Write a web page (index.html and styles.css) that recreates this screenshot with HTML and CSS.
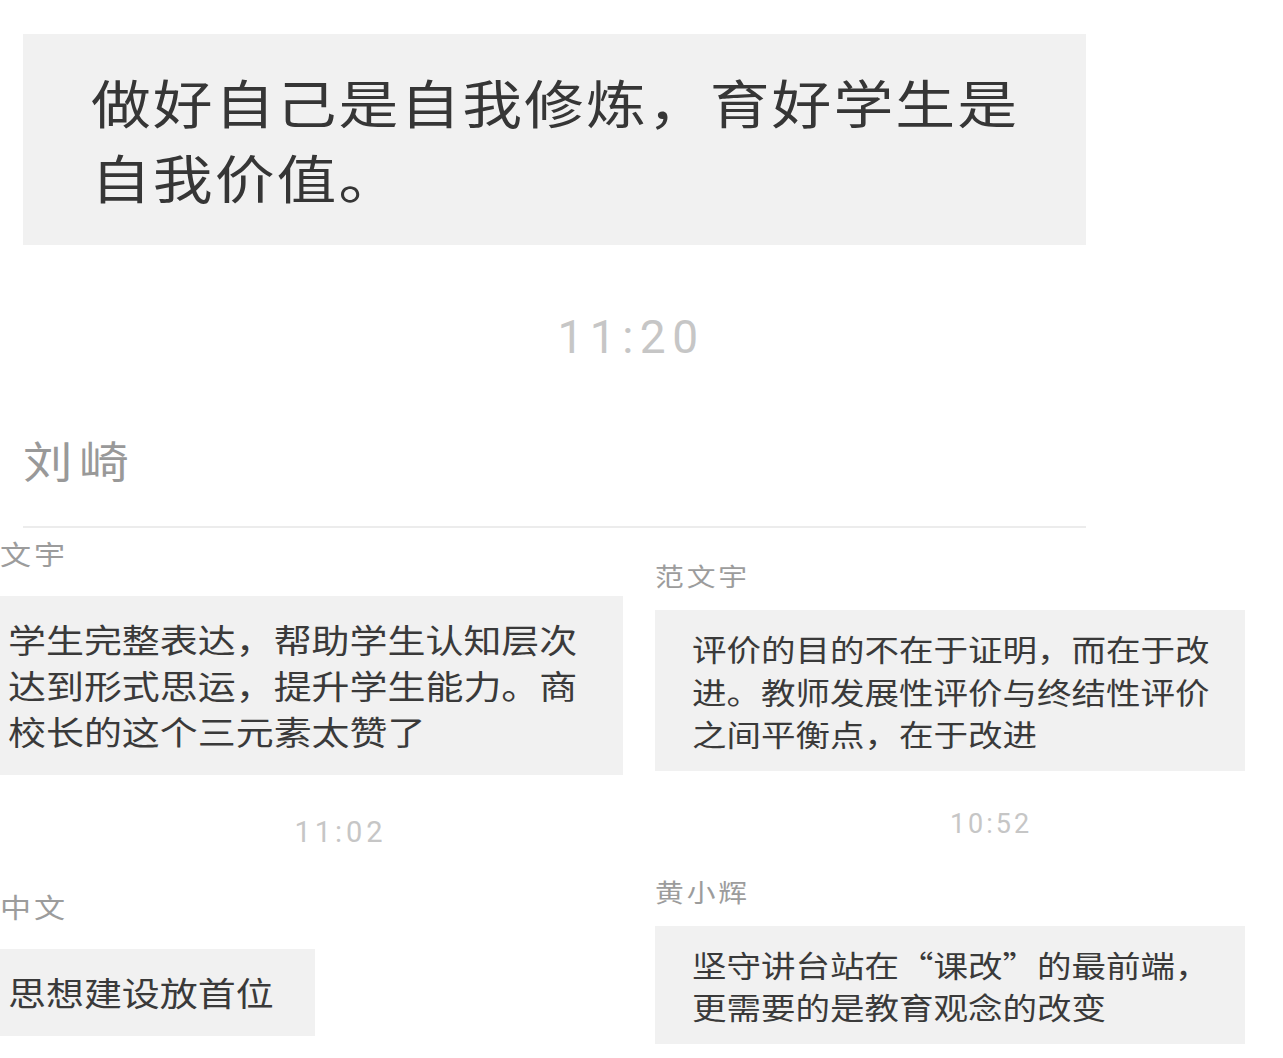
FILE: index.html
```html
<!DOCTYPE html>
<html lang="zh-CN">
<head>
<meta charset="utf-8">
<title>聊天记录</title>
<link rel="stylesheet" href="styles.css">
</head>
<body>
<main class="page">
  <section class="thread">
    <div class="bubble bubble-lg">
      <p class="msg">做好自己是自我修炼，育好学生是自我价值。</p>
    </div>
    <div class="time time-lg">11:20</div>
    <div class="sender sender-lg">刘崎</div>
    <hr class="divider">
  </section>

  <section class="columns">
    <div class="col col-left">
      <div class="sender sender-l first">文宇</div>
      <div class="bubble bubble-l">
        <p class="msg">学生完整表达，帮助学生认知层次达到形式思运，提升学生能力。商校长的这个三元素太赞了</p>
      </div>
      <div class="time time-l">11:02</div>
      <div class="sender sender-l">中文</div>
      <div class="bubble bubble-l bubble-short">
        <p class="msg">思想建设放首位</p>
      </div>
    </div>

    <div class="col col-right">
      <div class="sender sender-r first">范文宇</div>
      <div class="bubble bubble-r">
        <p class="msg">评价的目的不在于证明，而在于改进。教师发展性评价与终结性评价之间平衡点，在于改进</p>
      </div>
      <div class="time time-r">10:52</div>
      <div class="sender sender-r">黄小辉</div>
      <div class="bubble bubble-r">
        <p class="msg">坚守讲台站在“课改”的最前端，更需要的是教育观念的改变</p>
      </div>
    </div>
  </section>
</main>
</body>
</html>
```

FILE: styles.css
```css
html, body {
  margin: 0;
  padding: 0;
  background: #ffffff;
}

body {
  font-family: "Noto Sans CJK SC", "Noto Sans", sans-serif;
  color: #383838;
  width: 1283px;
  height: 1058px;
  overflow: hidden;
}

.page {
  padding-top: 34px;
}

/* The source screenshot is stretched horizontally (~1.15x):
   message text is rendered narrow, then widened. */
.msg {
  margin: 0;
  width: calc(100% / 1.15);
  transform: scaleX(1.15);
  transform-origin: left top;
}

.bubble {
  background: #f1f1f1;
  box-sizing: border-box;
}

/* ---------- top thread ---------- */
.thread {
  margin-left: 23px;
  width: 1063px;
}

.bubble-lg {
  padding: 30px 40px 31px 68px;
  font-size: 52px;
  line-height: 75px;
  letter-spacing: 1.8px;
  color: #363636;
}

.time {
  font-family: Roboto, "Liberation Sans", sans-serif;
  text-align: center;
  color: #c6c6c6;
}

.time-lg {
  margin-top: 69px;
  font-size: 46px;
  line-height: 46px;
  letter-spacing: 6.5px;
  padding-left: 153px;
}

.sender {
  color: #9c9c9c;
  transform: scaleX(1.15);
  transform-origin: left top;
}

.sender-lg {
  margin-top: 74px;
  font-size: 43px;
  line-height: 50px;
  letter-spacing: 6px;
  color: #999999;
  width: max-content;
}

.divider {
  margin: 42px 0 0;
  border: 0;
  height: 2px;
  background: #ececec;
}

/* ---------- two columns ---------- */
.columns {
  display: grid;
  grid-template-columns: 623px 590px;
  column-gap: 32px;
  align-items: start;
}

.col {
  display: flex;
  flex-direction: column;
  align-items: flex-start;
}

.col .time {
  align-self: stretch;
}

/* left column */
.sender-l {
  margin-top: 45px;
  font-size: 27px;
  line-height: 30px;
  letter-spacing: 2.5px;
}

.sender-l.first {
  margin-top: 11px;
}

.bubble-l {
  width: 100%;
  margin-top: 27px;
  padding: 20px 30px 21px 8px;
  font-size: 33px;
  line-height: 46px;
  color: #3a3a3a;
}

.bubble-short {
  width: 315px;
}

.bubble-short .msg {
  width: max-content;
}

.time-l {
  margin-top: 43px;
  font-size: 29px;
  line-height: 29px;
  letter-spacing: 4px;
  padding-left: 58px;
}

/* right column */
.sender-r {
  margin-top: 38px;
  font-size: 25px;
  line-height: 30px;
  letter-spacing: 2.5px;
}

.sender-r.first {
  margin-top: 32px;
}

.bubble-r {
  width: 100%;
  margin-top: 20px;
  padding: 17px 23px 16px 37px;
  font-size: 30px;
  line-height: 42.5px;
  color: #3a3a3a;
}

.time-r {
  margin-top: 40px;
  font-size: 27px;
  line-height: 27px;
  letter-spacing: 3px;
  padding-left: 82px;
}
```
